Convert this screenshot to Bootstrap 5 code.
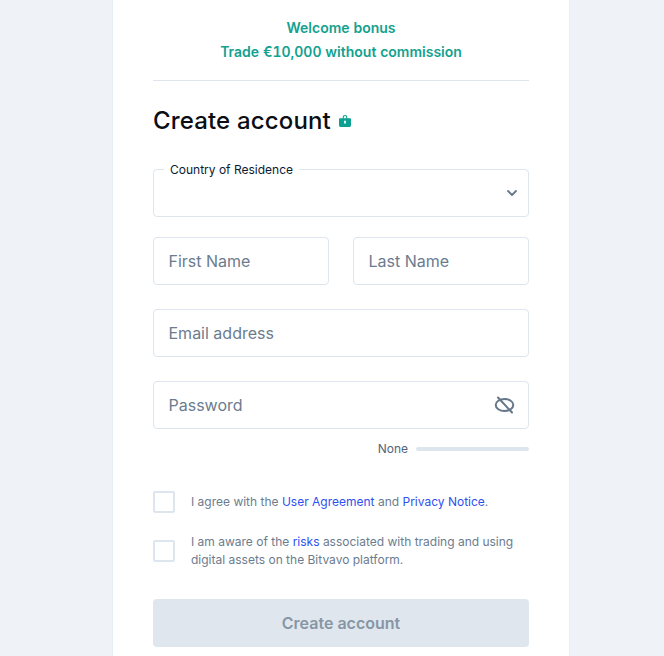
<!DOCTYPE html>
<html lang="en"><head><meta charset="utf-8">
<link href="https://cdn.jsdelivr.net/npm/bootstrap@5.3.0/dist/css/bootstrap.min.css" rel="stylesheet">
<style>
html,body{height:656px;overflow:hidden}
body{background:#eff3f8;font-family:Inter,"Liberation Sans",sans-serif;color:#0b0e14}
.sheet{width:458px;height:656px;margin-left:112px;background:#fff;border:solid #e8edf3;border-width:0 1px;padding:0 40px;overflow:hidden}
.promo{color:#12a18f;font-size:14px;font-weight:600;line-height:24px;padding-top:16px;height:81px;border-bottom:1px solid #dde6ef;font-feature-settings:"tnum";word-spacing:.1px}
.ttl{font-size:24px;font-weight:500;line-height:32px;margin:24px 0 0;letter-spacing:.16px}
.fld{height:48px;border:1px solid #dde6ef;border-radius:4px;padding:0 14.5px;display:flex;align-items:center;position:relative;font-size:16px;color:#6b7c8f;background:#fff}
.sel{margin-top:32px}
.lgd{position:absolute;left:10px;top:-8px;background:#fff;padding:0 6px;font-size:12px;line-height:16px;color:#0b1a33}
.rowx{display:flex;gap:24px;margin-top:20px}
.rowx .fld{flex:1}
.stk{margin-top:24px}
.ic{position:absolute}
.chev{right:10px;top:19px}
.eye{right:13px;top:13px}
.meter{height:40px;display:flex;align-items:center;justify-content:flex-end;gap:8px;font-size:12px;color:#52647a}
.trk{width:113px;height:4px;border-radius:2px;background:#dde6ef}
.cks{display:flex;align-items:center;font-size:12px;line-height:18px;color:#6b7c8f}
.cks1{margin-top:22px}
.cks2{margin-top:20px}
.box{width:22px;height:22px;border:2px solid #dde6ef;border-radius:2px;flex:none;margin:0 16px 0 0}
.cks a{color:#2f50f0;text-decoration:none}
.btn.go,.btn.go:disabled{width:100%;height:48px;border:0;border-radius:4px;background:#dfe6ee;color:#8796a5;font-size:16px;font-weight:600;margin-top:30px;opacity:1}
</style></head>
<body>
<main class="sheet">
<div class="promo text-center">Welcome bonus<br>Trade €10,000 without commission</div>
<h1 class="ttl d-flex align-items-center gap-2">Create account
<svg width="12" height="14" viewBox="0 0 13 14" fill="#0ba08f"><path d="M4 4V3a2.500 2.500 0 0 1 5 0v1h3a1 1 0 0 1 1 1v7a1.500 1.500 0 0 1-1.500 1.500h-10A1.500 1.500 0 0 1 0 12V5a1 1 0 0 1 1-1zm1.200 0h2.600V3a1.300 1.300 0 0 0-2.600 0z"/><rect x="5.600" y="6.500" width="1.800" height="3.500" rx=".9" fill="#fff"/></svg></h1>
<div class="fld sel"><span class="lgd">Country of Residence</span>
<svg class="ic chev" width="12" height="8" viewBox="0 0 12 8" fill="none" stroke="#66778a" stroke-width="1.800" stroke-linecap="round" stroke-linejoin="round"><path d="M2 2l4 4 4-4"/></svg></div>
<div class="rowx"><div class="fld">First Name</div><div class="fld">Last Name</div></div>
<div class="fld stk">Email address</div>
<div class="fld stk">Password
<svg class="ic eye" width="21" height="20" viewBox="0 0 21 20" fill="none" stroke="#66778a" stroke-width="2" stroke-linecap="round"><ellipse cx="10.500" cy="10" rx="8.800" ry="6"/><path d="M4 2.500l14 15"/></svg></div>
<div class="meter"><span>None</span><span class="trk"></span></div>
<div class="cks cks1"><span class="box"></span><span>I agree with the <a href="#">User Agreement</a> and <a href="#">Privacy Notice</a>.</span></div>
<div class="cks cks2"><span class="box"></span><span>I am aware of the <a href="#">risks</a> associated with trading and using<br>digital assets on the Bitvavo platform.</span></div>
<button class="btn go" type="button" disabled>Create account</button>
</main>
</body></html>
